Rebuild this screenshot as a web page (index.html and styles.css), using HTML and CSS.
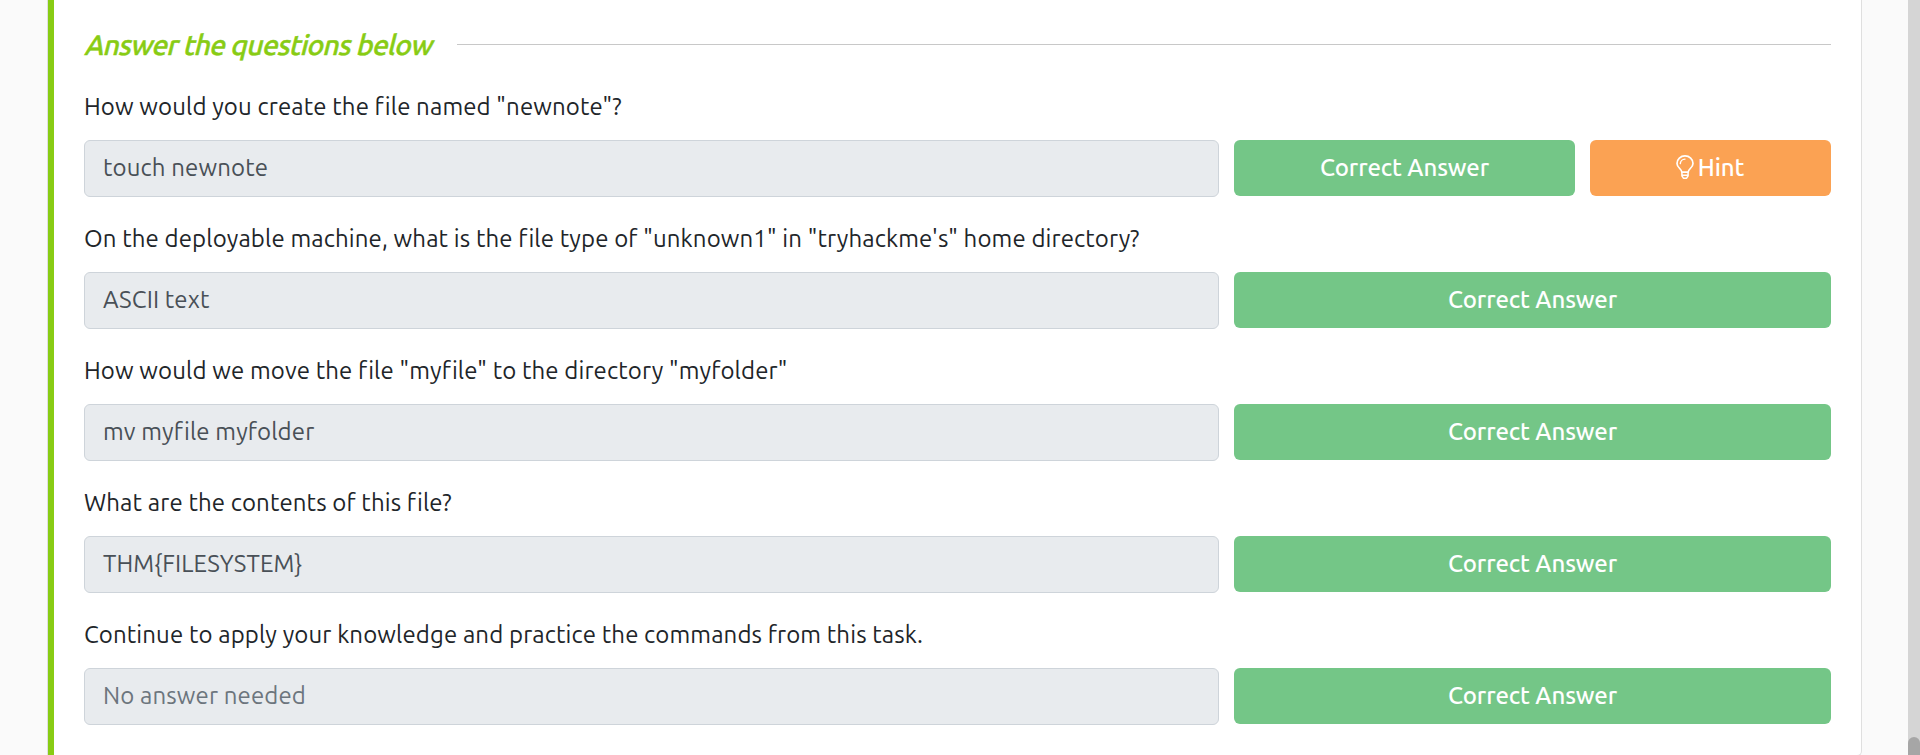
FILE: index.html
```html
<!DOCTYPE html>
<html lang="en">
<head>
<meta charset="utf-8">
<title>Task questions</title>
<link rel="stylesheet" href="styles.css">
</head>
<body>
<div class="page">
  <main class="content">
    <section class="card">
      <header class="heading">
        <h2 class="title">Answer the questions below</h2>
        <span class="rule"></span>
      </header>

      <div class="question">
        <p class="label">How would you create the file named "newnote"?</p>
        <div class="row">
          <div class="field">touch newnote</div>
          <div class="actions actions-split">
            <button class="btn btn-correct">Correct Answer</button>
            <button class="btn btn-hint">
              <svg class="bulb" viewBox="0 0 18 24" fill="none" stroke="currentColor" stroke-linecap="round" stroke-linejoin="round">
                <path stroke-width="1.7" d="M5.900 17.200C5.800 13.900 1 12.800 1 8.400a8 7.500 0 0 1 16 0c0 4.400-4.800 5.500-4.900 8.800z"/>
                <path stroke-width="1.400" d="M4.300 8.600A4.800 4.700 0 0 1 9 4.100"/>
                <path stroke-width="1.500" d="M5.900 17.200v3.700l1.500 2.300h3.200l1.500-2.300v-3.700M5.900 20.200h6.200"/>
              </svg>
              <span>Hint</span>
            </button>
          </div>
        </div>
      </div>

      <div class="question">
        <p class="label">On the deployable machine, what is the file type of "unknown1" in "tryhackme's" home directory?</p>
        <div class="row">
          <div class="field">ASCII text</div>
          <div class="actions"><button class="btn btn-correct">Correct Answer</button></div>
        </div>
      </div>

      <div class="question">
        <p class="label">How would we move the file "myfile" to the directory "myfolder"</p>
        <div class="row">
          <div class="field">mv myfile myfolder</div>
          <div class="actions"><button class="btn btn-correct">Correct Answer</button></div>
        </div>
      </div>

      <div class="question">
        <p class="label">What are the contents of this file?</p>
        <div class="row">
          <div class="field">THM{FILESYSTEM}</div>
          <div class="actions"><button class="btn btn-correct">Correct Answer</button></div>
        </div>
      </div>

      <div class="question">
        <p class="label">Continue to apply your knowledge and practice the commands from this task.</p>
        <div class="row">
          <div class="field field-empty">No answer needed</div>
          <div class="actions"><button class="btn btn-correct">Correct Answer</button></div>
        </div>
      </div>
    </section>
  </main>
  <div class="scrollbar"><div class="thumb"></div></div>
</div>
</body>
</html>
```

FILE: styles.css
```css
* { box-sizing: border-box; }

body {
  margin: 0;
  background: #fafafa;
  color: #212529;
  font: 400 24px/36px Ubuntu, "Noto Sans", sans-serif;
  letter-spacing: 0.12px;
}

.page {
  display: flex;
  height: 755px;
  overflow: hidden;
}

.content {
  flex: 1;
  padding: 0 46px 0 47px;
}

.card {
  height: 756px;
  padding: 26px 30px 0 36px;
  background: #fff;
  border: 1px solid #dfdfdf;
  border-top: 0;
  border-radius: 0 0 5px 0;
  box-shadow: inset 6px 0 #88cc14;
}

.heading {
  display: flex;
  align-items: center;
  gap: 24px;
  height: 36px;
  margin-bottom: 27px;
}

.title {
  width: 349px;
  margin: 1px 0 0;
  color: #88cc14;
  font-size: 28px;
  font-weight: 500;
  letter-spacing: -0.6px;
  line-height: 36px;
  white-space: nowrap;
  -webkit-text-stroke: 0.5px #88cc14;
  transform: skewX(-14deg);
  transform-origin: 0 28px;
}

.rule {
  flex: 1;
  height: 1px;
  margin-top: 1px;
  background: #c8c8c8;
}

.question { margin-bottom: 24px; }

.label {
  margin: 0 0 15px;
  white-space: nowrap;
}

.row {
  display: grid;
  grid-template-columns: 1135px 597px;
  column-gap: 15px;
  height: 57px;
}

.field {
  padding: 9px 18px 0;
  background: #e8ebee;
  border: 1px solid #ced4da;
  border-radius: 6px;
  color: #495057;
}

.field-empty { color: #6c757d; }

.actions {
  display: grid;
  column-gap: 15px;
  height: 56px;
}

.actions-split { grid-template-columns: 341px 241px; }

.btn {
  display: flex;
  align-items: center;
  justify-content: center;
  gap: 4px;
  padding: 0;
  border: 0;
  border-radius: 6px;
  color: #fff;
  font: 500 24px/36px Ubuntu, "Noto Sans", sans-serif;
  letter-spacing: -0.1px;
}

.btn-correct { background: #74c687; }
.btn-hint { padding-right: 1px; background: #fba253; }

.bulb {
  width: 18px;
  height: 24px;
  margin-bottom: 2px;
}

.scrollbar {
  display: flex;
  flex-direction: column;
  justify-content: flex-end;
  width: 12px;
  background: #d5d5d5;
}

.thumb {
  height: 18px;
  background: #a6a6a6;
  border-radius: 6px 6px 0 0;
}
```
